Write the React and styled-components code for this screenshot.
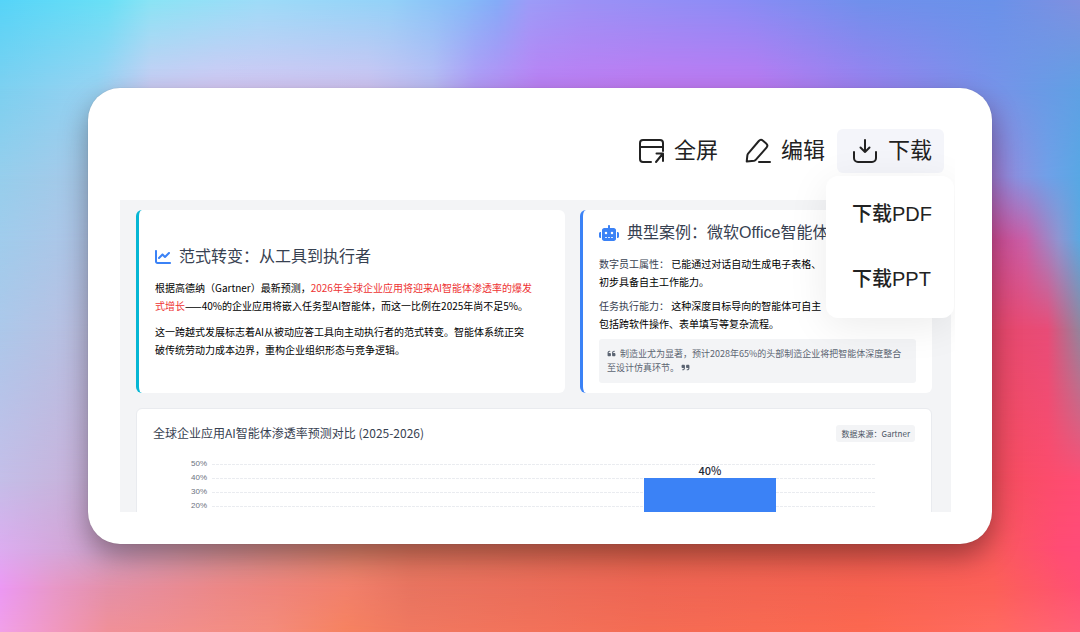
import React from 'react';
import { FaChartLine, FaQuoteLeft, FaQuoteRight, FaRobot } from 'react-icons/fa6';
import styled, { createGlobalStyle } from 'styled-components';

const GlobalStyle = createGlobalStyle`
	* {
		box-sizing: border-box;
	}
	body {
		margin: 0;
		font-family: 'Noto Sans CJK SC', sans-serif;
		color: #000;
	}
	h2, h3, p, blockquote {
		margin: 0;
		font-weight: 400;
	}
	button {
		border: 0;
		margin: 0;
		background: none;
		font-family: 'Liberation Sans', 'Noto Sans CJK SC', sans-serif;
		color: #222;
		cursor: pointer;
	}
`;

const Page = styled.main`
	position: relative;
	isolation: isolate;
	min-height: 100vh;
	padding: 88px;
`;

// each band fades into the one above it
const Band = styled.div`
	position: absolute;
	inset: 0;
	z-index: -1;
	background: linear-gradient(90deg, ${({ $colors }) => $colors});
	mask-image: linear-gradient(transparent ${({ $from }) => $from}%, #000 ${({ $to }) => $to}%);
`;

const Panel = styled.section`
	padding: 32px 37px 32px 32px;
	border-radius: 32px;
	background: #fff;
	box-shadow: 0 0 1px rgba(0, 0, 0, 0.2), 0 12px 28px rgba(0, 0, 0, 0.36);
`;

const Viewer = styled.div`
	overflow: clip;
`;

const Toolbar = styled.div`
	display: flex;
	justify-content: flex-end;
	padding: 9px 11px 27px 0;
`;

const ToolButton = styled.button`
	display: flex;
	align-items: center;
	gap: 10px;
	height: 44px;
	padding: 0 12px 0 15px;
	border-radius: 6px;
	background: ${({ $active }) => ($active ? '#f4f5fa' : 'transparent')};
	font-size: 22px;
	line-height: 32px;
	white-space: nowrap;
`;

const ToolIcon = styled.svg`
	width: 26px;
	height: 26px;
	fill: none;
	stroke: #222;
	stroke-width: 2;
	stroke-linecap: round;
	stroke-linejoin: round;
`;

const Dropdown = styled.div`
	position: relative;
`;

const DropdownMenu = styled.div`
	position: absolute;
	top: 47px;
	right: -10px;
	z-index: 2;
	display: flex;
	flex-direction: column;
	padding: 5px 0 7px;
	border-radius: 12px;
	background: #fff;
	box-shadow: 0 8px 40px rgba(0, 0, 0, 0.08);
`;

const MenuItem = styled.button`
	height: 65px;
	padding: 0 22px 0 26px;
	font-size: 20px;
	font-weight: 500;
	line-height: 28px;
	text-align: left;
	white-space: nowrap;
`;

const Slide = styled.article`
	display: grid;
	grid-template-columns: 429fr 352fr;
	align-content: start;
	gap: 15px;
	height: 312px;
	margin-right: 4px;
	padding: 10px 19px 0 16px;
	overflow: hidden;
	background: #f3f4f6;
`;

const Card = styled.section`
	display: flex;
	flex-direction: column;
	justify-content: center;
	gap: ${({ $gap }) => $gap}px;
	padding: 11px 16px 10px;
	border-left: 3px solid ${({ $accent }) => $accent};
	border-radius: 6px;
	background: #fff;
	white-space: nowrap;
`;

const CardTitle = styled.h2`
	display: flex;
	align-items: center;
	gap: 8px;
	margin-bottom: ${({ $space }) => $space}px;
	color: #374151;
	font-family: 'Liberation Sans', 'Noto Sans CJK SC', sans-serif;
	font-size: 16px;
	line-height: 24px;

	svg {
		color: #3b82f6;
		font-size: ${({ $icon }) => $icon}px;
	}
`;

const Text = styled.p`
	font-size: 10px;
	line-height: 18px;
`;

const Highlight = styled.span`
	color: #ee3333;
`;

const Label = styled.span`
	color: #374151;
`;

const Quote = styled.blockquote`
	padding: 8px;
	border-radius: 3px;
	background: #f3f4f6;
	color: #5b6472;
	font-size: 9px;
	line-height: 14px;

	svg {
		margin-right: 2px;
		vertical-align: -1px;
	}
`;

const ChartCard = styled.section`
	grid-column: 1 / -1;
	padding: 15px 16px;
	border: 1px solid #e9ebef;
	border-radius: 6px;
	background: #fff;
`;

const ChartHeader = styled.header`
	display: flex;
	align-items: center;
	justify-content: space-between;
`;

const ChartTitle = styled.h3`
	color: #374151;
	font-size: 12px;
	line-height: 18px;
`;

const Source = styled.span`
	padding: 0 5px;
	border-radius: 3px;
	background: #f3f4f6;
	color: #4b5563;
	font-size: 8px;
	line-height: 17px;
`;

const Chart = styled.div`
	display: grid;
	grid-template-columns: 54px 1fr;
	column-gap: 5px;
	padding: 15px 39px 0 0;
`;

const Ticks = styled.div`
	color: #6b7280;
	font-family: 'Liberation Sans', sans-serif;
	font-size: 8px;
	line-height: 14px;
	text-align: right;
`;

const Plot = styled.div`
	display: grid;
	height: 70px;
	margin-top: 7px;

	> * {
		grid-area: 1 / 1;
	}
`;

const GridLine = styled.div`
	height: 14px;
	background: repeating-linear-gradient(90deg, #eaecf0 0 3px, transparent 3px 4px) top / 100% 1px no-repeat;
`;

const Bars = styled.div`
	display: grid;
	grid-template-columns: 1fr 1fr;
	align-items: end;
	justify-items: center;
`;

const Bar = styled.div`
	display: flex;
	justify-content: center;
	width: 40%;
	background: #3b82f6;
`;

const BarLabel = styled.span`
	height: 16px;
	margin-top: -16px;
	color: #1f2937;
	font-size: 11px;
	font-weight: 500;
	line-height: 16px;
`;

const wallpaper = [
	{
		from: -1,
		to: 0,
		colors: '#56d4f8, #6ae0f6 10%, #8ae4f5 14%, #9edcf8 24%, #94d2f8 36%, #86bcf8 43%, #84acf8 46%, #9c9cf8 49%, #9c92f6 54%, #8c8cf6 68%, #7090ec 80%, #6a92ea 92%, #8090e0',
	},
	{
		from: 0,
		to: 14,
		colors: '#7cd0f0, #98d2f2 9%, #ccccf4 14%, #d4c8f4 20%, #d0c4f2 34%, #bcbcf4 40%, #b49af6 44%, #bc80f4 50%, #c07af2 60%, #bc7af2 70%, #9a82f0 80%, #7c90ea 90%, #60a0e4',
	},
	{ from: 14, to: 28, colors: '#96ceec, #a8c8e8 8%, #a07cd4 92%, #8c90e0 94%, #70a0e8 97%, #58a8e4' },
	{ from: 28, to: 38, colors: '#a0ccec, #b0c4e6 8%, #d04c94 92%, #c860a8 95%, #9094d0 98%, #5ca8e0' },
	{ from: 38, to: 52, colors: '#acc8ea, #bcbee0 8%, #e8486c 92%, #e84c78 97%, #94849c' },
	{ from: 52, to: 76, colors: '#c4bee8, #c8b0d8 8%, #f44e5c 92%, #fc4c6c 97%, #ff4c74' },
	{
		from: 76,
		to: 87,
		colors: '#dcacf0, #d0a4d0 8%, #d8949c 20%, #e4846c 33%, #e47860 38%, #e8644e 60%, #f05c50 80%, #fa5a5c 92%, #ff4c74 98%, #ff4c78',
	},
	{
		from: 87,
		to: 93,
		colors: '#ec98f4, #e898c8 5%, #e490a8 10%, #ec8888 20%, #f2806c 32%, #e87460 38%, #ee6654 60%, #f66250 80%, #fc6058 92%, #ff5074',
	},
	{
		from: 93,
		to: 100,
		colors: '#f0a0e8, #f09098 10%, #f48c7c 25%, #f68260 32%, #f07860 38%, #f46c54 60%, #fc6850 80%, #ff6a60 92%, #ff6078',
	},
];

const ticks = ['50%', '40%', '30%', '20%'];

const AXIS_MAX = 50;
const bars = [
	{ year: 2025, value: 5 },
	{ year: 2026, value: 40, label: '40%' },
];

function FullscreenIcon() {
	return (
		<ToolIcon viewBox="0 0 26 26" aria-hidden="true">
			<path d="M13 24H5a3 3 0 0 1-3-3V5a3 3 0 0 1 3-3h17a3 3 0 0 1 3 3v8M2 9h23" />
			<path d="M18.500 15.500H25V23M24.500 16 18 24" />
		</ToolIcon>
	);
}

function EditIcon() {
	return (
		<ToolIcon viewBox="0 0 26 26" aria-hidden="true">
			<path d="M1.700 23.500l.7-6.300c.1-.6.3-1 .7-1.500L13.800 3a3 3 0 0 1 4.200-.3l3.200 2.700a3 3 0 0 1 .3 4.200L10.700 21.800c-.4.500-.9.800-1.500.9z" />
			<path d="M14 24h11" />
		</ToolIcon>
	);
}

function DownloadIcon() {
	return (
		<ToolIcon viewBox="0 0 26 26" aria-hidden="true">
			<path d="M2 14v6a4 4 0 0 0 4 4h14a4 4 0 0 0 4-4v-6" />
			<path d="M13 2v12M8.500 9.500 13 14l4.500-4.500" />
		</ToolIcon>
	);
}

export default function App() {
	return (
		<>
			<GlobalStyle />
			<Page>
				{wallpaper.map((band) => (
					<Band key={band.to} $from={band.from} $to={band.to} $colors={band.colors} />
				))}
				<Panel>
					<Viewer>
						<Toolbar>
							<ToolButton type="button">
								<FullscreenIcon />
								全屏
							</ToolButton>
							<ToolButton type="button">
								<EditIcon />
								编辑
							</ToolButton>
							<Dropdown>
								<ToolButton type="button" $active aria-haspopup="menu" aria-expanded="true">
									<DownloadIcon />
									下载
								</ToolButton>
								<DropdownMenu role="menu">
									<MenuItem type="button" role="menuitem">
										下载PDF
									</MenuItem>
									<MenuItem type="button" role="menuitem">
										下载PPT
									</MenuItem>
								</DropdownMenu>
							</Dropdown>
						</Toolbar>

						<Slide>
							<Card $accent="#06b6d4" $gap={8}>
								<CardTitle $icon={16} $space={2}>
									<FaChartLine />
									范式转变：从工具到执行者
								</CardTitle>
								<Text>
									根据高德纳（Gartner）最新预测，
									<Highlight>
										2026年全球企业应用将迎来AI智能体渗透率的爆发
										<br />
										式增长
									</Highlight>
									——40%的企业应用将嵌入任务型AI智能体，而这一比例在2025年尚不足5%。
								</Text>
								<Text>
									这一跨越式发展标志着AI从被动应答工具向主动执行者的范式转变。智能体系统正突
									<br />
									破传统劳动力成本边界，重构企业组织形态与竞争逻辑。
								</Text>
							</Card>

							<Card $accent="#3b82f6" $gap={6}>
								<CardTitle $icon={20} $space={4}>
									<FaRobot />
									典型案例：微软Office智能体
								</CardTitle>
								<Text>
									<Label>数字员工属性：</Label> 已能通过对话自动生成电子表格、
									<br />
									初步具备自主工作能力。
								</Text>
								<Text>
									<Label>任务执行能力：</Label> 这种深度目标导向的智能体可自主
									<br />
									包括跨软件操作、表单填写等复杂流程。
								</Text>
								<Quote>
									<FaQuoteLeft /> 制造业尤为显著，预计2028年65%的头部制造企业将把智能体深度整合
									<br />
									至设计仿真环节。 <FaQuoteRight />
								</Quote>
							</Card>

							<ChartCard>
								<ChartHeader>
									<ChartTitle>全球企业应用AI智能体渗透率预测对比 (2025-2026)</ChartTitle>
									<Source>数据来源：Gartner</Source>
								</ChartHeader>
								<Chart>
									<Ticks>
										{ticks.map((tick) => (
											<div key={tick}>{tick}</div>
										))}
									</Ticks>
									<Plot>
										<div>
											{ticks.map((tick) => (
												<GridLine key={tick} />
											))}
										</div>
										<Bars>
											{bars.map((bar) => (
												<Bar key={bar.year} style={{ height: `${(bar.value / AXIS_MAX) * 100}%` }}>
													{bar.label && <BarLabel>{bar.label}</BarLabel>}
												</Bar>
											))}
										</Bars>
									</Plot>
								</Chart>
							</ChartCard>
						</Slide>
					</Viewer>
				</Panel>
			</Page>
		</>
	);
}
